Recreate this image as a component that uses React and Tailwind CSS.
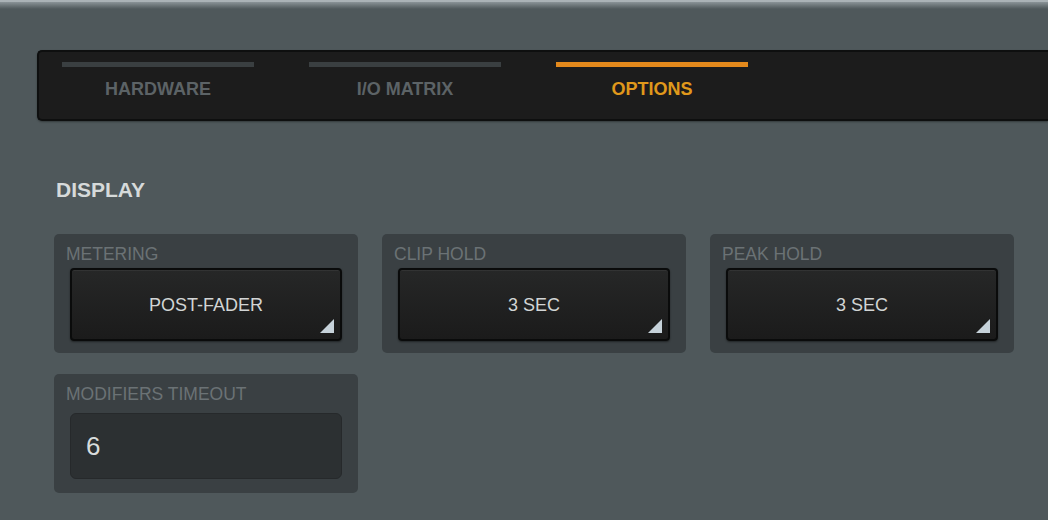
import React from "react";

const tabs = [
  { label: "HARDWARE", active: false },
  { label: "I/O MATRIX", active: false },
  { label: "OPTIONS", active: true },
];

const selects = [
  { label: "METERING", value: "POST-FADER" },
  { label: "CLIP HOLD", value: "3 SEC" },
  { label: "PEAK HOLD", value: "3 SEC" },
];

const Dropdown = ({ value }) => (
  <div className="relative mx-4 mt-[4px] h-[73px] rounded-[4px] border-2 border-[#0a0b0b] bg-gradient-to-b from-[#262727] to-[#1b1b1b] shadow-[0_1px_2px_rgba(0,0,0,0.45),inset_0_1px_0_rgba(255,255,255,0.06)] flex items-center justify-center">
    <span className="text-[18px] text-[#d2d5d5] leading-none">{value}</span>
    <svg
      className="absolute right-[6px] bottom-[6px]"
      width="14"
      height="14"
      viewBox="0 0 14 14"
    >
      <polygon points="14,0 14,14 0,14" fill="#c6d2da" />
    </svg>
  </div>
);

const App = () => {
  return (
    <div className="w-[1048px] h-[520px] overflow-hidden bg-[#4f585b] font-['Liberation_Sans',Arial,sans-serif]">
      {/* window edge */}
      <div className="h-[2px] bg-[#aab2b6]" />
      <div className="h-[7px] bg-gradient-to-b from-[#8a9397] to-[#4f585b]" />

      {/* tab strip */}
      <div className="ml-[37px] mt-[41px] h-[71px] rounded-l-[5px] border-2 border-r-0 border-[#0e0f0f] bg-[#1c1c1c] shadow-[0_1px_2px_rgba(0,0,0,0.35)] flex gap-[55px] pl-[23px] pt-[10px]">
        {tabs.map((t) => (
          <div key={t.label} className="w-[192px] flex flex-col items-center">
            <div
              className={
                t.active
                  ? "w-full h-[5px] bg-[#e3891c]"
                  : "w-full h-[5px] bg-[#3a3f41]"
              }
            />
            <span
              className={
                t.active
                  ? "mt-[12px] text-[18px] leading-[21px] font-bold text-[#e0991b]"
                  : "mt-[12px] text-[18px] leading-[21px] font-bold text-[#5c6366]"
              }
            >
              {t.label}
            </span>
          </div>
        ))}
      </div>

      {/* display section */}
      <div className="pl-[56px] mt-[56px]">
        <h2 className="text-[21px] leading-[25px] font-bold text-[#d6dada]">
          DISPLAY
        </h2>
      </div>

      <div className="ml-[54px] mt-[32px] grid grid-cols-[304px_304px_304px] gap-x-[24px] gap-y-[21px]">
        {selects.map((s) => (
          <div
            key={s.label}
            className="h-[119px] rounded-[5px] bg-[#3a4043] pt-[10px]"
          >
            <div className="pl-[12px] text-[17.5px] leading-[20px] text-[#6b7275]">
              {s.label}
            </div>
            <Dropdown value={s.value} />
          </div>
        ))}

        <div className="h-[119px] rounded-[5px] bg-[#3a4043] pt-[10px]">
          <div className="pl-[12px] text-[17.5px] leading-[20px] text-[#6b7275]">
            MODIFIERS TIMEOUT
          </div>
          <div className="mx-4 mt-[9px] h-[66px] rounded-[6px] border border-[#26292b] bg-[#2c3032] flex items-center pl-[15px]">
            <span className="text-[26px] leading-none text-[#d8dcdc]">6</span>
          </div>
        </div>
      </div>
    </div>
  );
};

export default App;
